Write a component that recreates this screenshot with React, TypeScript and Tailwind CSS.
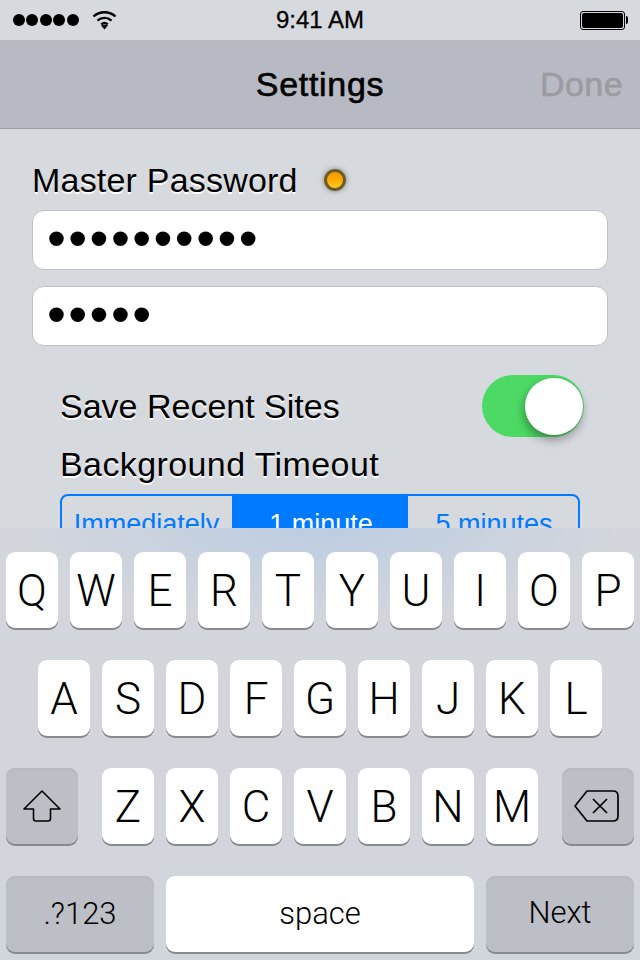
import React from 'react'

const rowOne = ['Q', 'W', 'E', 'R', 'T', 'Y', 'U', 'I', 'O', 'P']
const rowTwo = ['A', 'S', 'D', 'F', 'G', 'H', 'J', 'K', 'L']
const rowThree = ['Z', 'X', 'C', 'V', 'B', 'N', 'M']

const lightFont = "font-['Roboto',sans-serif] font-light"
const labelText = "text-[34px] leading-[40px] text-black [text-shadow:0_1.5px_0_#ffffff]"

function LetterKey({ label }: { label: string }) {
  return (
    <div className={`flex h-[76px] w-[52px] items-center justify-center rounded-[9px] bg-white pt-[2px] text-[44px] text-black shadow-[0_2px_0_#88898d] ${lightFont}`}>
      {label}
    </div>
  )
}

function GrayKey({ width, children }: { width: string; children: React.ReactNode }) {
  return (
    <div className={`flex h-[76px] items-center justify-center rounded-[9px] bg-[#bcbfc5] text-black shadow-[0_2px_0_#88898d,inset_0_2px_0_#b6b9bf] ${width}`}>
      {children}
    </div>
  )
}

function PasswordField({ dots }: { dots: string }) {
  return (
    <div className="flex h-[60px] items-center rounded-[12px] border border-[#bfc1c6] bg-white pl-[14px] font-['Liberation_Sans',sans-serif] text-[54px] leading-none tracking-[2.4px] text-black">
      <span className="-mt-[4px]">{dots}</span>
    </div>
  )
}

export default function App() {
  return (
    <div className="flex h-[960px] w-[640px] flex-col overflow-hidden bg-[#d6d9de] font-['Liberation_Sans',sans-serif]">
      {/* status bar */}
      <div className="flex h-[40px] shrink-0 items-center justify-between pl-[13px] pr-[12px]">
        <div className="flex w-[200px] items-center">
          <div className="flex gap-[1.4px]">
            {[0, 1, 2, 3, 4].map(i => (
              <div key={i} className="h-[12px] w-[12px] rounded-full bg-black" />
            ))}
          </div>
          <svg className="ml-[13px]" width="25" height="20" viewBox="0 0 25 20" fill="none" stroke="#000" strokeWidth="2.4">
            <path d="M1.5 6.5C7.5 .8 17.5 .8 23.5 6.5" />
            <path d="M5.5 10.6C9.5 7 15.5 7 19.5 10.6" />
            <path d="M9.2 14.4C11.2 12.8 13.8 12.8 15.8 14.4" />
            <path d="M12.5 19.5L9 15.6C11 14.4 14 14.4 16 15.6Z" fill="#000" stroke="none" />
          </svg>
        </div>
        <div className="-ml-[1px] text-[24px] leading-none text-black [-webkit-text-stroke:0.3px_#000]">9:41 AM</div>
        <div className="flex w-[200px] items-center justify-end">
          <div className="flex h-[19px] w-[45px] items-center justify-center rounded-[3px] border border-black">
            <div className="h-[15px] w-[41px] rounded-[2px] bg-black" />
          </div>
          <div className="ml-[1px] h-[8px] w-[2px] rounded-r-[2px] bg-black" />
        </div>
      </div>

      {/* nav bar */}
      <div className="relative flex h-[89px] shrink-0 items-center justify-center border-b border-[#9c9ea4] bg-[#b7bac2]">
        <div className="text-[34px] leading-none tracking-[0.7px] text-black [-webkit-text-stroke:0.6px_#000]">Settings</div>
        <div className="absolute right-[17px] top-[27px] text-[34px] leading-none tracking-[0.4px] text-[#9a9ca2] [-webkit-text-stroke:0.6px_#9a9ca2]">Done</div>
      </div>

      {/* form, runs on under the keyboard */}
      <div className="min-h-0 flex-1 overflow-hidden px-[32px] pt-[31px]">
        <div className="flex h-[40px] items-center">
          <div className={`tracking-[0.2px] ${labelText}`}>Master Password</div>
          <div className="ml-[26px] h-[22px] w-[22px] rounded-full border-[3px] border-[#6a5a28] bg-[linear-gradient(to_bottom,#f09a00,#ffa800_45%,#ffcc22)] shadow-[0_0_5px_rgba(60,50,20,0.55)]" />
        </div>
        <div className="mt-[10px] flex flex-col gap-[16px]">
          <PasswordField dots="••••••••••" />
          <PasswordField dots="•••••" />
        </div>
        <div className="px-[28px]">
          <div className="mt-[29px] flex h-[62px] items-center justify-between">
            <div className={labelText}>Save Recent Sites</div>
            <div className="relative -mr-[4px] h-[62px] w-[102px] rounded-full bg-[#4cd964]">
              <div className="absolute right-[1px] top-[3px] h-[57px] w-[58px] rounded-full bg-white shadow-[-1px_5px_10px_rgba(0,0,0,0.35)]" />
            </div>
          </div>
          <div className={`mt-[7px] tracking-[0.4px] ${labelText}`}>Background Timeout</div>
          <div className="mt-[10px] flex h-[60px] overflow-hidden rounded-[8px] border-2 border-[#007aff] text-[27px] leading-none text-[#007aff]">
            <div className="flex w-[170px] items-center justify-center pr-[1px]">Immediately</div>
            <div className="flex w-[176px] items-center justify-center bg-[#007aff] pl-[2px] text-white">1 minute</div>
            <div className="flex flex-1 items-center justify-center pl-[2px]">5 minutes</div>
          </div>
        </div>
      </div>

      {/* keyboard */}
      <div className="flex h-[432px] shrink-0 flex-col gap-[32px] bg-[radial-gradient(ellipse_300px_90px_at_50%_0%,#bccde2,rgba(188,205,226,0)),linear-gradient(to_bottom,#d3d6dc,#d1d5dc)] px-[6px] pt-[24px]">
        <div className="flex gap-[12px]">
          {rowOne.map(k => <LetterKey key={k} label={k} />)}
        </div>
        <div className="flex justify-center gap-[12px]">
          {rowTwo.map(k => <LetterKey key={k} label={k} />)}
        </div>
        <div className="flex justify-between">
          <GrayKey width="w-[72px]">
            <svg width="38" height="32" viewBox="0 0 38 32" fill="none" stroke="#000" strokeWidth="1.6" strokeLinejoin="round">
              <path d="M19 1L1 19H10.5V28.5Q10.5 31 13 31H25Q27.5 31 27.5 28.5V19H37Z" />
            </svg>
          </GrayKey>
          <div className="flex gap-[12px]">
            {rowThree.map(k => <LetterKey key={k} label={k} />)}
          </div>
          <GrayKey width="w-[72px]">
            <svg className="-ml-[2px]" width="46" height="34" viewBox="0 0 46 34" fill="none" stroke="#000" strokeWidth="1.7" strokeLinejoin="round">
              <path d="M13 2H39Q44 2 44 7V27Q44 32 39 32H13L1 17Z" />
              <path d="M19 10L33 24M33 10L19 24" />
            </svg>
          </GrayKey>
        </div>
        <div className="flex gap-[12px]">
          <GrayKey width="w-[148px]"><span className={`text-[31px] ${lightFont}`}>.?123</span></GrayKey>
          <div className={`flex h-[76px] flex-1 items-center justify-center rounded-[9px] bg-white text-[31px] text-black shadow-[0_2px_0_#88898d] ${lightFont}`}>space</div>
          <GrayKey width="w-[148px]"><span className={`-mt-[2px] text-[31px] ${lightFont}`}>Next</span></GrayKey>
        </div>
      </div>
    </div>
  )
}
